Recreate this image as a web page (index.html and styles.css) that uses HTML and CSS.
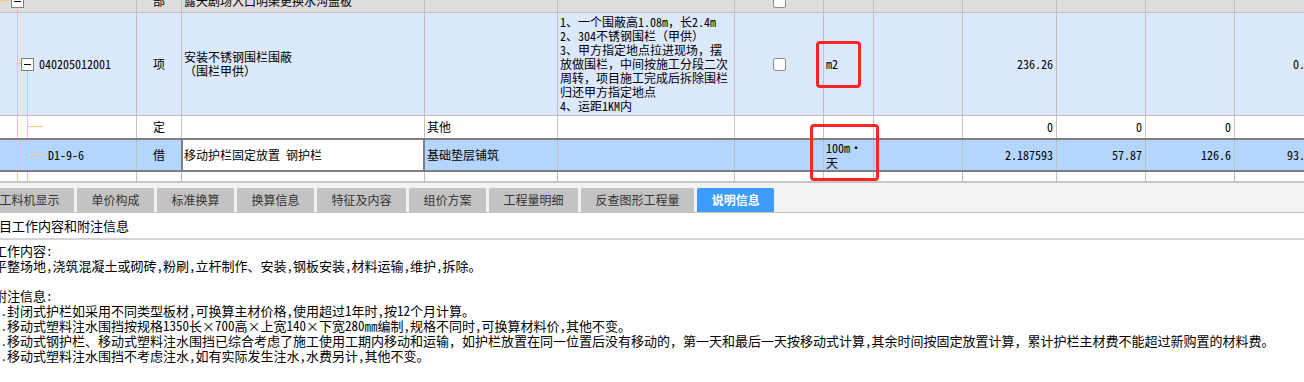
FILE: index.html
```html
<!DOCTYPE html>
<html lang="zh-CN">

<head>
    <meta charset="UTF-8">
    <meta name="viewport" content="width=device-width, initial-scale=1.0">
    <title>说明信息</title>
    <link rel="stylesheet" href="styles.css">
</head>

<body>
    <div class="page">

        <!-- quota grid -->
        <div class="grid">
            <div class="rows">
                <div class="row row-part">
                    <div class="cell tree tree-part"><span class="fold"></span></div>
                    <div class="cell center">部</div>
                    <div class="cell text">露天剧场入口明渠更换水沟盖板</div>
                    <div class="cell"></div>
                    <div class="cell"></div>
                    <div class="cell center"><span class="check"></span></div>
                    <div class="cell"></div>
                    <div class="cell"></div>
                    <div class="cell"></div>
                    <div class="cell"></div>
                    <div class="cell"></div>
                    <div class="cell"></div>
                </div>

                <div class="row row-item">
                    <div class="cell tree tree-item"><span class="fold"></span><span class="code">040205012001</span></div>
                    <div class="cell center">项</div>
                    <div class="cell text">安装不锈钢围栏围蔽<br>（围栏甲供）</div>
                    <div class="cell"></div>
                    <div class="cell text feat">1、一个围蔽高1.08m，长2.4m<br>2、304不锈钢围栏（甲供）<br>3、甲方指定地点拉进现场，摆<br>放做围栏，中间按施工分段二次<br>周转，项目施工完成后拆除围栏<br>归还甲方指定地点<br>4、运距1KM内</div>
                    <div class="cell center"><span class="check"></span></div>
                    <div class="cell text">m2</div>
                    <div class="cell"></div>
                    <div class="cell num">236.26</div>
                    <div class="cell"></div>
                    <div class="cell"></div>
                    <div class="cell num">0.16</div>
                </div>

                <div class="row row-quota">
                    <div class="cell tree tree-leaf"></div>
                    <div class="cell center">定</div>
                    <div class="cell"></div>
                    <div class="cell text">其他</div>
                    <div class="cell"></div>
                    <div class="cell"></div>
                    <div class="cell"></div>
                    <div class="cell"></div>
                    <div class="cell num">0</div>
                    <div class="cell num">0</div>
                    <div class="cell num">0</div>
                    <div class="cell"></div>
                </div>

                <div class="row row-sel">
                    <div class="cell tree tree-leaf"><span class="code leaf-code">D1-9-6</span></div>
                    <div class="cell center edge">借</div>
                    <div class="cell text edit">移动护栏固定放置 钢护栏</div>
                    <div class="cell text">基础垫层铺筑</div>
                    <div class="cell"></div>
                    <div class="cell"></div>
                    <div class="cell text unit">100m·<br>天</div>
                    <div class="cell"></div>
                    <div class="cell num">2.187593</div>
                    <div class="cell num">57.87</div>
                    <div class="cell num">126.6</div>
                    <div class="cell num">93.21</div>
                </div>

                <div class="row row-last">
                    <div class="cell tree tree-rest"></div>
                    <div class="cell"></div>
                    <div class="cell"></div>
                    <div class="cell"></div>
                    <div class="cell"></div>
                    <div class="cell"></div>
                    <div class="cell"></div>
                    <div class="cell"></div>
                    <div class="cell"></div>
                    <div class="cell"></div>
                    <div class="cell"></div>
                    <div class="cell"></div>
                </div>
            </div>
        </div>

        <!-- detail tabs -->
        <div class="tabbar">
            <div class="tabs">
                <span class="tab">工料机显示</span>
                <span class="tab">单价构成</span>
                <span class="tab">标准换算</span>
                <span class="tab">换算信息</span>
                <span class="tab">特征及内容</span>
                <span class="tab">组价方案</span>
                <span class="tab">工程量明细</span>
                <span class="tab">反查图形工程量</span>
                <span class="tab active">说明信息</span>
            </div>
        </div>

        <div class="info-head">项目工作内容和附注信息</div>

        <div class="info-body">
            <p class="line">工作内容:</p>
            <p class="line">平整场地,浇筑混凝土或砌砖,粉刷,立杆制作、安装,钢板安装,材料运输,维护,拆除。</p>
            <p class="line"></p>
            <p class="line">附注信息:</p>
            <p class="line">1.封闭式护栏如采用不同类型板材,可换算主材价格,使用超过1年时,按12个月计算。</p>
            <p class="line">2.移动式塑料注水围挡按规格1350长×700高×上宽140×下宽280㎜编制,规格不同时,可换算材料价,其他不变。</p>
            <p class="line">3.移动式钢护栏、移动式塑料注水围挡已综合考虑了施工使用工期内移动和运输，如护栏放置在同一位置后没有移动的，第一天和最后一天按移动式计算,其余时间按固定放置计算，累计护栏主材费不能超过新购置的材料费。</p>
            <p class="line">4.移动式塑料注水围挡不考虑注水,如有实际发生注水,水费另计,其他不变。</p>
        </div>

        <!-- red annotation boxes -->
        <div class="mark mark-unit"></div>
        <div class="mark mark-sel"></div>
    </div>
</body>

</html>
```
FILE: styles.css
```css
body {
    margin: 0;
    padding: 0;
    background-color: #fff;
    font-family: "Noto Sans CJK SC", sans-serif;
    color: #000;
}

.page {
    position: relative;
    width: 1304px;
    height: 382px;
    overflow: hidden;
}

/* grid */
.grid {
    height: 183px;
    overflow: hidden;
    border-bottom: 2px solid #c8c8c8;
    box-sizing: border-box;
    font-family: "Noto Sans Mono CJK SC", "Noto Sans CJK SC", sans-serif;
    font-size: 12px;
}

.rows {
    margin-top: -10px;
}

.row {
    display: grid;
    grid-template-columns: 137px 45px 243px 133px 177px 89px 50px 89px 94px 89px 89px 86px;
    box-sizing: border-box;
}

.cell {
    display: flex;
    align-items: center;
    overflow: hidden;
    white-space: nowrap;
    box-sizing: border-box;
    border-right: 1px solid #c0c0c0;
    line-height: 14px;
}

.cell.text {
    padding-left: 2px;
}

.cell.center {
    justify-content: center;
}

.cell.num {
    justify-content: flex-end;
    padding-right: 3px;
}

.feat {
    padding-left: 1px;
}

.row-part {
    height: 23px;
    background-color: #dedede;
    border-bottom: 1px solid #c0c0c0;
}

.row-item {
    height: 103px;
    background-color: #dce8fc;
    border-bottom: 1px solid #c0c0c0;
}

.row-quota {
    height: 22px;
    background-color: #fff;
}

.row-sel {
    height: 34px;
    background-color: #b4d6fe;
    border-top: 2px solid #808080;
    border-bottom: 2px solid #808080;
}

.row-last {
    height: 9px;
    background-color: #fff;
}

.row-sel .edge {
    border-right-color: #808080;
}

.row-sel .edit {
    background-color: #fff;
    border-right-color: #808080;
    box-shadow: inset 1px 0 #808080, inset -1px 0 #808080;
}

.unit {
    line-height: 15px;
}

/* tree lines */
.tree {
    padding-left: 11px;
    background-repeat: no-repeat;
}

.tree-part {
    background-image: linear-gradient(#ffc67f, #ffc67f), linear-gradient(#ffc67f, #ffc67f);
    background-position: 17px 15px, 0 10px;
    background-size: 1px 100%, 11px 1px;
}

.tree-item {
    padding-left: 21px;
    background-image: linear-gradient(#ffc67f, #ffc67f), linear-gradient(#ffc67f, #ffc67f), linear-gradient(#ffc67f, #ffc67f);
    background-position: 17px 0, 17px 50px, 27px 57px;
    background-size: 1px 100%, 4px 1px, 1px 100%;
}

.tree-leaf {
    padding-left: 48px;
    background-image: linear-gradient(#ffc67f, #ffc67f), linear-gradient(#ffc67f, #ffc67f), linear-gradient(#ffc67f, #ffc67f);
    background-position: 17px 0, 27px 0, 27px 10px;
    background-size: 1px 100%, 1px 100%, 16px 1px;
}

.row-sel .tree-leaf {
    background-position: 17px 0, 27px 0, 27px 14px;
}

.tree-rest {
    background-image: linear-gradient(#ffc67f, #ffc67f), linear-gradient(#ffc67f, #ffc67f);
    background-position: 17px 0, 27px 0;
    background-size: 1px 100%, 1px 100%;
}

.fold {
    position: relative;
    flex: none;
    width: 13px;
    height: 13px;
    box-sizing: border-box;
    border: 1px solid #808080;
    background-color: #fff;
}

.fold::after {
    content: "";
    position: absolute;
    left: 2px;
    top: 5px;
    width: 7px;
    height: 1px;
    background-color: #000;
}

.code {
    margin-left: 5px;
}

.leaf-code {
    margin-left: 0;
}

.check {
    width: 13px;
    height: 13px;
    box-sizing: border-box;
    border: 1px solid #8e8e8e;
    border-radius: 2px;
    background-color: #fff;
}

/* tabs */
.tabbar {
    height: 30px;
    box-sizing: border-box;
    padding-top: 5px;
    background-color: #f2f2f2;
    border-bottom: 1px solid #c8c8c8;
    overflow: hidden;
}

.tabs {
    display: flex;
    gap: 3px;
    margin-left: -15px;
}

.tab {
    flex: none;
    height: 24px;
    padding: 0 14.5px;
    line-height: 24px;
    font-size: 12px;
    color: #333;
    background-color: #c3c3c3;
    border-radius: 2px 2px 0 0;
}

.tab.active {
    color: #fff;
    font-weight: bold;
    background-color: #3f9cff;
}

/* info */
.info-head {
    height: 25px;
    line-height: 25px;
    margin-left: -14px;
    font-size: 13px;
    white-space: nowrap;
    border-bottom: 2px solid #d4d4d4;
}

.info-body {
    padding-top: 3px;
    margin-left: -6px;
    font-family: "Noto Sans Mono CJK SC", "Noto Sans CJK SC", sans-serif;
    font-size: 13px;
}

.line {
    margin: 0;
    height: 15px;
    line-height: 15px;
    white-space: nowrap;
}

/* annotations */
.mark {
    position: absolute;
    box-sizing: border-box;
    border: 3px solid #ff2424;
    border-radius: 4px;
}

.mark-unit {
    left: 816px;
    top: 41px;
    width: 45px;
    height: 47px;
}

.mark-sel {
    left: 810px;
    top: 124px;
    width: 69px;
    height: 57px;
}
```
